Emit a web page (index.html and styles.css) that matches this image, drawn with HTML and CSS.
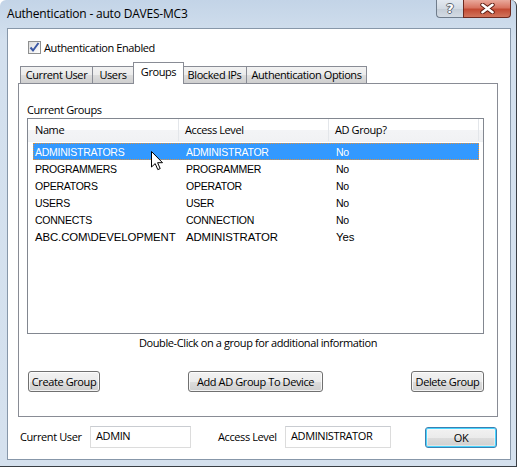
FILE: index.html
```html
<!DOCTYPE html>
<html>
<head>
<meta charset="utf-8">
<title>Authentication - auto DAVES-MC3</title>
<link rel="stylesheet" href="styles.css">
</head>
<body>
<div class="window">
  <div class="titlebar">
    <span class="title">Authentication - auto DAVES-MC3</span>
    <div class="caption-buttons">
      <div class="cbtn help"><span class="help-glyph">?</span></div>
      <div class="cbtn close">
        <svg width="15" height="11" viewBox="0 0 15 11">
          <path d="M2.5 1.8 L12.5 9.2 M12.5 1.8 L2.5 9.2" stroke="#5a1a10" stroke-width="4.4" stroke-linecap="round" fill="none"/>
          <path d="M2.5 1.8 L12.5 9.2 M12.5 1.8 L2.5 9.2" stroke="#ffffff" stroke-width="2.6" stroke-linecap="round" fill="none"/>
        </svg>
      </div>
    </div>
  </div>
  <div class="client">
    <div class="check-row">
      <span class="checkbox">
        <svg width="11" height="11" viewBox="0 0 11 11">
          <path d="M1.5 5.5 L4 8.5 L9.5 1" stroke="#3a57a4" stroke-width="2" fill="none"/>
        </svg>
      </span>
      <span class="check-label">Authentication Enabled</span>
    </div>
    <div class="tabs">
      <div class="tab t1">Current User</div>
      <div class="tab t2">Users</div>
      <div class="tab t3 active">Groups</div>
      <div class="tab t4">Blocked IPs</div>
      <div class="tab t5">Authentication Options</div>
    </div>
    <div class="panel">
      <div class="group-label">Current Groups</div>
      <div class="list">
        <div class="list-header">
          <div class="hcell h1">Name</div>
          <div class="hcell h2">Access Level</div>
          <div class="hcell h3">AD Group?</div>
          <div class="hcell hfill"></div>
        </div>
        <div class="rows">
          <div class="row selected"><span class="cell c1">ADMINISTRATORS</span><span class="cell c2">ADMINISTRATOR</span><span class="cell c3">No</span></div>
          <div class="row"><span class="cell c1">PROGRAMMERS</span><span class="cell c2">PROGRAMMER</span><span class="cell c3">No</span></div>
          <div class="row"><span class="cell c1">OPERATORS</span><span class="cell c2">OPERATOR</span><span class="cell c3">No</span></div>
          <div class="row"><span class="cell c1">USERS</span><span class="cell c2">USER</span><span class="cell c3">No</span></div>
          <div class="row"><span class="cell c1">CONNECTS</span><span class="cell c2">CONNECTION</span><span class="cell c3">No</span></div>
          <div class="row ad"><span class="cell c1">ABC.COM\DEVELOPMENT</span><span class="cell c2">ADMINISTRATOR</span><span class="cell c3">Yes</span></div>
        </div>
        <svg class="cursor" width="13" height="20" viewBox="0 0 13 20">
          <path d="M0.5 0.5 L0.5 16 L4.2 12.6 L6.8 18.6 L9.2 17.6 L6.6 11.7 L11.5 11.7 Z" fill="#ffffff" stroke="#000000" stroke-width="1" stroke-linejoin="miter"/>
        </svg>
      </div>
      <div class="hint">Double-Click on a group for additional information</div>
      <div class="button-row">
        <div class="btn b-create">Create Group</div>
        <div class="btn b-add">Add AD Group To Device</div>
        <div class="btn b-delete">Delete Group</div>
      </div>
    </div>
    <div class="bottom-row">
      <span class="field-label l1">Current User</span>
      <div class="field f1">ADMIN</div>
      <span class="field-label l2">Access Level</span>
      <div class="field f2">ADMINISTRATOR</div>
      <div class="btn ok">OK</div>
    </div>
  </div>
</div>
</body>
</html>
```

FILE: styles.css
```css
html, body {
  margin: 0;
  padding: 0;
  background: #ffffff;
}

body {
  font-family: "Open Sans", "Noto Sans", sans-serif;
  font-size: 11px;
  letter-spacing: -0.4px;
  color: #000000;
}

.window {
  width: 517px;
  height: 467px;
  box-sizing: border-box;
  background: linear-gradient(#c3d4e7, #d3e0ee 40px, #d5e1ee);
  border-right: 1px solid #3a3f45;
  border-bottom: 1px solid #3a3f45;
  border-radius: 6px 6px 0 0;
  overflow: hidden;
  display: flex;
  flex-direction: column;
}

.titlebar {
  height: 28px;
  display: flex;
  align-items: flex-start;
  flex: none;
}

.title {
  flex: 1;
  padding-left: 7px;
  line-height: 28px;
  font-size: 12px;
  letter-spacing: -0.2px;
}

.caption-buttons {
  display: flex;
  margin-right: 5px;
}

.cbtn {
  height: 18px;
  box-sizing: border-box;
  display: flex;
  align-items: center;
  justify-content: center;
  border: 1px solid #6f7c8b;
  border-top: none;
}

.help {
  width: 27px;
  border-right: none;
  border-radius: 0 0 0 4px;
  background: linear-gradient(#e3e9f0, #d2dae3 50%, #c3ccd6 51%, #d3dbe4);
}

.help-glyph {
  font-family: "DejaVu Sans", sans-serif;
  font-size: 13px;
  font-weight: bold;
  color: #ffffff;
  letter-spacing: 0;
  line-height: 16px;
  text-shadow: 1px 0 0 #5d6670, -1px 0 0 #5d6670, 0 1px 0 #5d6670, 0 -1px 0 #5d6670;
}

.close {
  width: 48px;
  border-color: #6e2a20;
  border-radius: 0 0 4px 0;
  background: linear-gradient(#e9a99c, #d87461 45%, #c24a33 55%, #d1745c);
}

.client {
  flex: none;
  margin: 0 5px 0 7px;
  height: 432px;
  box-sizing: border-box;
  background: #ffffff;
  border: 1px solid #8797a9;
  display: flex;
  flex-direction: column;
  align-items: flex-start;
}

/* checkbox */
.check-row {
  margin: 12px 0 0 20px;
  display: flex;
  align-items: center;
  height: 13px;
}

.checkbox {
  width: 13px;
  height: 13px;
  box-sizing: border-box;
  border: 1px solid #8e8f8f;
  background: linear-gradient(135deg, #dcdcdc, #ffffff);
  display: flex;
  align-items: center;
  justify-content: center;
}

.check-label {
  margin-left: 3px;
  line-height: 15px;
}

/* tabs */
.tabs {
  margin: 8px 0 0 12px;
  height: 21px;
  display: flex;
  align-items: flex-end;
}

.tab {
  height: 17px;
  box-sizing: border-box;
  border: 1px solid #898c95;
  border-bottom: none;
  border-left: none;
  background: linear-gradient(#f2f2f2, #ebebeb 50%, #dddddd 51%, #cfcfcf);
  line-height: 16px;
  text-align: center;
}

.t1 { width: 73px; border-left: 1px solid #898c95; }
.t2 { width: 41px; }
.t3 { width: 49px; }
.t4 { width: 64px; border-left: none; }
.t5 { width: 120px; }

.tab.active {
  height: 22px;
  margin: 0 -1px -1px -1px;
  width: 51px;
  border-left: 1px solid #898c95;
  background: #ffffff;
  line-height: 18px;
  z-index: 1;
}

/* panel */
.panel {
  margin-left: 10px;
  width: 480px;
  height: 334px;
  box-sizing: border-box;
  border: 1px solid #898c95;
  background: #ffffff;
  display: flex;
  flex-direction: column;
  align-items: flex-start;
}

.group-label {
  margin: 19px 0 0 8px;
  line-height: 14px;
}

.list {
  margin: 1px 0 0 8px;
  width: 457px;
  height: 216px;
  box-sizing: border-box;
  border: 1px solid #828790;
  position: relative;
}

.list-header {
  display: flex;
  height: 22px;
  background: linear-gradient(#ffffff, #ffffff 50%, #f3f4f6 51%, #f1f2f4);
  border-bottom: 1px solid #eef0f3;
}

.hcell {
  box-sizing: border-box;
  height: 22px;
  line-height: 22px;
  border-right: 1px solid #e3e6ea;
}

.h1 { width: 151px; padding-left: 7px; }
.h2 { width: 150px; padding-left: 6px; }
.h3 { width: 150px; padding-left: 6px; }
.hfill { flex: 1; border-right: none; }

.rows {
  margin: 1px 0 0 5px;
  width: 446px;
  display: flex;
  flex-direction: column;
}

.row {
  height: 17px;
  box-sizing: border-box;
  display: flex;
  align-items: center;
  font-family: "Liberation Sans", Arial, sans-serif;
  font-size: 10.5px;
  letter-spacing: -0.25px;
  border: 1px solid transparent;
}

.row.selected {
  background: #3399ff;
  color: #ffffff;
  border: 1px dotted #e0913e;
}

.row.ad {
  font-size: 11.4px;
  letter-spacing: -0.1px;
}

.cell { box-sizing: border-box; white-space: nowrap; }
.c1 { width: 146px; padding-left: 1px; }
.c2 { width: 150px; padding-left: 6px; }
.c3 { width: 148px; padding-left: 6px; }

.cursor {
  position: absolute;
  left: 123px;
  top: 32px;
}

.hint {
  align-self: center;
  margin-top: 2px;
  line-height: 14px;
}

.button-row {
  margin: 21px 0 0 9px;
  width: 456px;
  display: flex;
  justify-content: space-between;
}

.btn {
  height: 21px;
  box-sizing: border-box;
  border: 1px solid #707070;
  border-radius: 3px;
  background: linear-gradient(#f2f2f2, #ebebeb 50%, #dddddd 51%, #cfcfcf);
  box-shadow: inset 0 0 0 1px rgba(255,255,255,0.75);
  display: flex;
  align-items: center;
  justify-content: center;
  line-height: 19px;
}

.b-create { width: 72px; }
.b-add { width: 135px; }
.b-delete { width: 73px; }

/* bottom row */
.bottom-row {
  margin: 9px 0 0 12px;
  display: flex;
  align-items: center;
  height: 22px;
}

.field-label {
  line-height: 22px;
}

.l1 { width: 70px; }
.l2 { width: 67px; margin-left: 27px; }

.field {
  height: 22px;
  box-sizing: border-box;
  border: 1px solid #dcdcdc;
  border-top-color: #c9ccd1;
  padding-left: 5px;
  line-height: 18px;
}

.f1 { width: 101px; }
.f2 { width: 106px; }

.btn.ok {
  width: 72px;
  margin-left: 34px;
  border-color: #3c7fb1;
  box-shadow: inset 0 0 0 1px #48d5ff, inset 0 0 0 2px rgba(255,255,255,0.4);
}
```
